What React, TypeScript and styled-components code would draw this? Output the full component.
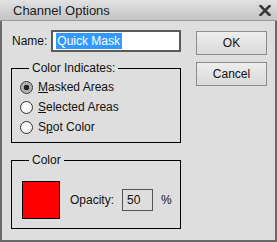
import React from 'react'
import styled, {createGlobalStyle} from 'styled-components'

const GlobalStyle = createGlobalStyle`
  html, body {
    margin: 0;
    padding: 0;
    background: #dedede;
  }
  body {
    font-family: "Liberation Sans", Arial, sans-serif;
    color: #111;
  }
`

const Window = styled.div`
  width: 277px;
  height: 242px;
  display: flex;
  flex-direction: column;
  box-sizing: border-box;
  background: #dedede;
`

const TitleBar = styled.div`
  height: 21px;
  flex: none;
  display: flex;
  align-items: center;
  justify-content: space-between;
  padding: 0 6px 0 13px;
  box-sizing: border-box;
  background: linear-gradient(#e2e2e2, #c3c3c3);
  border-bottom: 1px solid #9a9a9a;
  font-size: 13px;
  color: #1a1a1a;
`

const Body = styled.div`
  flex: 1;
  display: flex;
  padding: 9px 8px 10px 9px;
  border: 2px solid #6a6a6a;
  border-top: none;
`

const LeftColumn = styled.div`
  width: 170px;
  display: flex;
  flex-direction: column;
`

const NameRow = styled.div`
  display: flex;
  align-items: center;
  height: 22px;
  font-size: 12px;
  padding-left: 1px;
`

const Label = styled.span<{gap?: number; before?: number}>`
  margin-right: ${(p) => p.gap ?? 0}px;
  margin-left: ${(p) => p.before ?? 0}px;
  font-size: 12px;
`

const TextBox = styled.div<{w: number}>`
  width: ${(p) => p.w}px;
  height: 22px;
  box-sizing: border-box;
  border: 2px solid #5a5a5a;
  background: #fff;
  display: flex;
  align-items: center;
  padding-left: 3px;
  font-size: 12px;
`

const Selected = styled.span`
  background: #3399ff;
  color: #fff;
  padding: 0 1px;
  line-height: 16px;
  border-right: 1px solid #d07020;
`

const OpacityBox = styled(TextBox)`
  background: #dedede;
  border: 1px solid #555;
  padding-left: 4px;
`

const Group = styled.fieldset<{pt: number; pb: number}>`
  margin: ${(p) => (p.pt > 10 ? 10 : 9)}px 0 0 0;
  border: 1px solid #000;
  padding: ${(p) => p.pt}px 8px ${(p) => p.pb}px 8px;
  min-width: 0;
`

const Legend = styled.legend`
  font-size: 12px;
  line-height: 14px;
  padding: 0 3px;
  margin-left: 9px;
`

const RadioRow = styled.label`
  display: flex;
  align-items: center;
  height: 20px;
  font-size: 12px;
  gap: 5px;
`

const RadioDot = styled.span<{checked?: boolean}>`
  width: 13px;
  height: 13px;
  box-sizing: border-box;
  border-radius: 50%;
  border: 1px solid #333;
  background: ${(p) => (p.checked ? 'radial-gradient(circle, #222 0 2.5px, #aaa 3px, #c8c8c8 100%)' : 'radial-gradient(circle at 40% 40%, #fff, #ececec)')};
  flex: none;
`

const ColorRow = styled.div`
  display: flex;
  align-items: center;
  font-size: 12px;
`

const Swatch = styled.div<{color: string}>`
  width: 38px;
  height: 38px;
  box-sizing: border-box;
  border: 1px solid #000;
  background: ${(p) => p.color};
  margin-left: 2px;
  margin-right: 10px;
`

const ButtonColumn = styled.div`
  display: flex;
  flex-direction: column;
  gap: 7px;
  margin-left: 15px;
  padding-top: 1px;
`

const Button = styled.button`
  width: 71px;
  height: 24px;
  box-sizing: border-box;
  border: 1px solid #8c8c8c;
  background: linear-gradient(#ededed, #dadada);
  font-family: "Liberation Sans", Arial, sans-serif;
  font-size: 12px;
  color: #111;
  padding: 0;
`

const CloseX = () => (
  <svg width="12" height="11" viewBox="0 0 12 11">
    <path d="M1.5 1 L10.5 10 M10.5 1 L1.5 10" stroke="#3a3a3a" strokeWidth="2.6" strokeLinecap="square" />
  </svg>
)

const options = [
  {id: 'masked', label: <><u>M</u>asked Areas</>, checked: true},
  {id: 'selected', label: <><u>S</u>elected Areas</>},
  {id: 'spot', label: <>S<u>p</u>ot Color</>},
]

export default function App() {
  return (
    <Window>
      <GlobalStyle />
      <TitleBar>
        <span>Channel Options</span>
        <CloseX />
      </TitleBar>
      <Body>
        <LeftColumn>
          <NameRow>
            <Label gap={4}>Name:</Label>
            <TextBox w={132}>
              <Selected>Quick Mask</Selected>
            </TextBox>
          </NameRow>
          <Group pt={2} pb={5}>
            <Legend>Color Indicates:</Legend>
            {options.map((o) => (
              <RadioRow key={o.id}>
                <RadioDot checked={o.checked} />
                <span>{o.label}</span>
              </RadioRow>
            ))}
          </Group>
          <Group pt={14} pb={9}>
            <Legend>Color</Legend>
            <ColorRow>
              <Swatch color="#ff0000" />
              <Label gap={8}>Opacity:</Label>
              <OpacityBox w={31}>50</OpacityBox>
              <Label before={8}>%</Label>
            </ColorRow>
          </Group>
        </LeftColumn>
        <ButtonColumn>
          <Button>OK</Button>
          <Button>Cancel</Button>
        </ButtonColumn>
      </Body>
    </Window>
  )
}
